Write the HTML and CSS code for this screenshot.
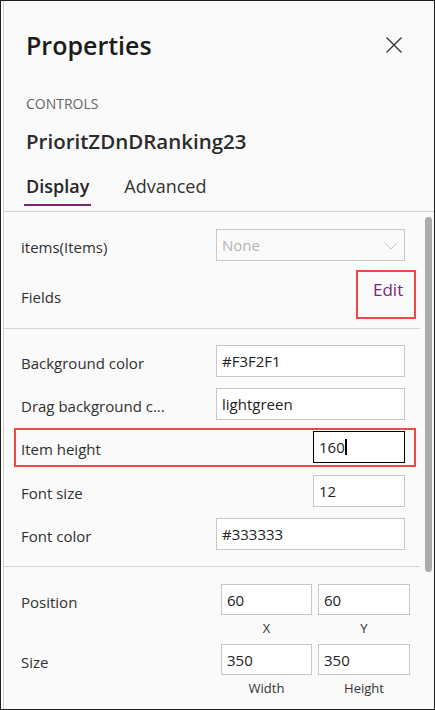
FILE: index.html
```html
<!DOCTYPE html>
<html lang="en">
<head>
<meta charset="utf-8">
<title>Properties</title>
<link rel="stylesheet" href="styles.css">
</head>
<body>
<div class="frame">
  <div class="panel">
    <header class="header">
      <h1 class="title">Properties</h1>
      <button class="close" aria-label="Close">
        <svg width="16" height="16" viewBox="0 0 16 16"><path d="M0.5 0.5 L15.5 15.5 M15.5 0.5 L0.5 15.5" stroke="#333" stroke-width="1.3" fill="none"/></svg>
      </button>
    </header>
    <div class="eyebrow">CONTROLS</div>
    <div class="control-name">PrioritZDnDRanking23</div>
    <nav class="tabs">
      <span class="tab active">Display</span>
      <span class="tab">Advanced</span>
    </nav>
    <div class="scroll">
      <div class="content">
        <section class="section s1">
          <div class="row">
            <span class="label">items(Items)</span>
            <div class="select wide">
              <span>None</span>
              <svg width="14" height="8" viewBox="0 0 14 8"><path d="M0.5 0.5 L7 7 L13.5 0.5" stroke="#c4c4c4" stroke-width="1" fill="none"/></svg>
            </div>
          </div>
          <div class="row fields">
            <span class="label">Fields</span>
            <span class="annot edit-box"><span class="edit">Edit</span></span>
          </div>
        </section>
        <section class="section s2">
          <div class="row">
            <span class="label">Background color</span>
            <div class="input wide">#F3F2F1</div>
          </div>
          <div class="row">
            <span class="label">Drag background c...</span>
            <div class="input wide">lightgreen</div>
          </div>
          <div class="annot annot-row">
            <div class="row inner">
              <span class="label">Item height</span>
              <div class="input narrow focused">160<span class="caret"></span></div>
            </div>
          </div>
          <div class="row">
            <span class="label">Font size</span>
            <div class="input narrow">12</div>
          </div>
          <div class="row">
            <span class="label">Font color</span>
            <div class="input wide">#333333</div>
          </div>
        </section>
        <section class="section s3">
          <div class="grid-row">
            <span class="label">Position</span>
            <div class="input small">60</div>
            <div class="input small">60</div>
            <span class="caption">X</span>
            <span class="caption">Y</span>
          </div>
          <div class="grid-row">
            <span class="label">Size</span>
            <div class="input small">350</div>
            <div class="input small">350</div>
            <span class="caption">Width</span>
            <span class="caption">Height</span>
          </div>
        </section>
      </div>
      <div class="scrollbar"><div class="thumb"></div></div>
    </div>
  </div>
</div>
</body>
</html>
```

FILE: styles.css
```css
* { box-sizing: border-box; }
html, body { margin: 0; padding: 0; }
body {
  font-family: "Open Sans", "Noto Sans", sans-serif;
  color: #333;
  background: #fafafa;
}
.frame {
  width: 435px;
  height: 710px;
  border: 1px solid #1e1e1e;
  background: #fdfdfd;
  padding-left: 2px;
  display: flex;
  overflow: hidden;
}
.panel {
  flex: 1;
  min-width: 0;
  border-left: 1px solid #d2d2d2;
  background: #fafafa;
  display: flex;
  flex-direction: column;
}
.header {
  display: flex;
  align-items: center;
  justify-content: space-between;
  padding: 28px 32px 0 22px;
}
.title {
  margin: 0;
  font-size: 25px;
  font-weight: 600;
  line-height: 32px;
  color: #1b1b1b;
}
.close {
  width: 16px;
  height: 32px;
  padding: 0;
  border: 0;
  background: none;
  display: flex;
  align-items: center;
  justify-content: center;
}
.eyebrow {
  margin-top: 34px;
  padding-left: 22px;
  font-size: 14px;
  line-height: 18px;
  color: #666;
}
.control-name {
  margin-top: 14px;
  padding-left: 22px;
  font-size: 20.5px;
  font-weight: 600;
  line-height: 28px;
  color: #2b2b2b;
}
.tabs {
  margin-top: 19px;
  margin-bottom: 5px;
  padding-left: 20px;
  display: flex;
  gap: 31px;
}
.tab {
  padding: 0 2px 6px;
  font-size: 18px;
  line-height: 24px;
  color: #333;
  border-bottom: 2px solid transparent;
}
.tab.active {
  font-weight: 600;
  color: #262626;
  border-bottom-color: #742774;
}
.scroll {
  flex: 1;
  min-height: 0;
  border-top: 1px solid #d0d0d0;
  display: flex;
  overflow: hidden;
}
.content {
  flex: 1;
  min-width: 0;
  display: flex;
  flex-direction: column;
}
.scrollbar {
  width: 14px;
  padding-left: 5px;
  padding-top: 5px;
}
.thumb {
  width: 7px;
  height: 355px;
  border-radius: 4px;
  background: #ababab;
}
.section {
  border-bottom: 1px solid #d4d4d4;
}
.s1 {
  padding: 17px 15px 9px 17px;
}
.s2 {
  padding: 16px 15px 16px 17px;
  display: flex;
  flex-direction: column;
  gap: 11px;
}
.s3 {
  padding: 17px 10px 0 17px;
  border-bottom: 0;
  display: flex;
  flex-direction: column;
  gap: 7px;
}
.row {
  display: flex;
  align-items: center;
  justify-content: space-between;
}
.label {
  padding-top: 4px;
  font-size: 15px;
  line-height: 20px;
  color: #303030;
  white-space: nowrap;
}
.select, .input {
  height: 32px;
  border: 1px solid #c8c8c8;
  font-size: 15px;
  line-height: 20px;
  padding: 0 6px 0 5px;
  display: flex;
  align-items: center;
  white-space: nowrap;
}
.input { background: #fff; color: #222; }
.wide { width: 189px; }
.narrow { width: 92px; }
.select {
  justify-content: space-between;
  color: #b5b5b5;
  background: transparent;
}
.select svg { margin-top: 1px; }
.fields {
  margin-top: 9px;
}
.annot {
  border: 2px solid #f04848;
}
.edit-box {
  width: 60px;
  height: 49px;
  margin-right: -11px;
  padding: 7px 0 0 15px;
}
.edit {
  font-size: 17px;
  line-height: 22px;
  color: #742774;
}
.annot-row {
  margin: -3px -11px -3px -7px;
  padding: 1px 9px 2px 5px;
}
.focused {
  border-color: #000;
}
.caret {
  display: inline-block;
  width: 2px;
  height: 16px;
  background: #000;
}
.grid-row {
  display: grid;
  grid-template-columns: 1fr 91px 92px;
  grid-template-rows: 31px auto;
  column-gap: 6px;
}
.grid-row .label {
  grid-row: 1;
  grid-column: 1;
  align-self: center;
}
.input.small {
  height: 31px;
  width: auto;
}
.caption {
  grid-row: 2;
  margin-top: 4px;
  font-size: 13px;
  line-height: 18px;
  text-align: center;
  color: #333;
}
.grid-row .caption:nth-of-type(2) { grid-column: 2; }
.grid-row .caption:nth-of-type(3) { grid-column: 3; }
```
